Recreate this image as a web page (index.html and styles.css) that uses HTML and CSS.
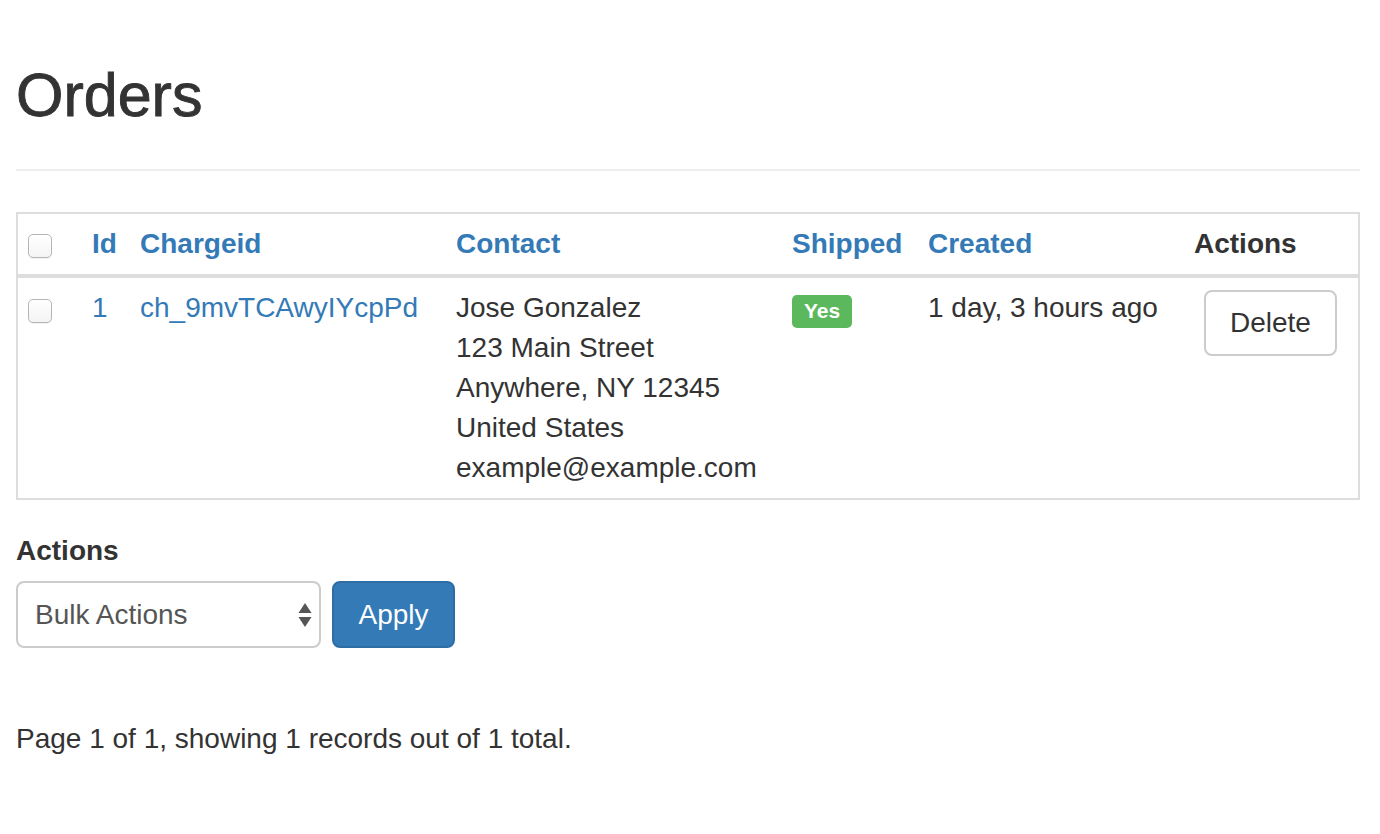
FILE: index.html
```html
<!DOCTYPE html>
<html lang="en">
<head>
<meta charset="utf-8">
<title>Orders</title>
<link rel="stylesheet" href="styles.css">
</head>
<body>
<div class="page">
  <div class="page-header">
    <h1 class="title">Orders</h1>
  </div>

  <table class="orders">
    <thead>
      <tr>
        <th class="c-check"><span class="checkbox"></span></th>
        <th class="c-id"><a href="#">Id</a></th>
        <th class="c-charge"><a href="#">Chargeid</a></th>
        <th class="c-contact"><a href="#">Contact</a></th>
        <th class="c-shipped"><a href="#">Shipped</a></th>
        <th class="c-created"><a href="#">Created</a></th>
        <th class="c-actions">Actions</th>
      </tr>
    </thead>
    <tbody>
      <tr>
        <td><span class="checkbox checkbox-row"></span></td>
        <td><a href="#">1</a></td>
        <td><a href="#">ch_9mvTCAwyIYcpPd</a></td>
        <td>
          <div>Jose Gonzalez</div>
          <div>123 Main Street</div>
          <div>Anywhere, NY 12345</div>
          <div>United States</div>
          <div>example@example.com</div>
        </td>
        <td><span class="label-yes">Yes</span></td>
        <td>1 day, 3 hours ago</td>
        <td><button class="btn btn-default" type="button">Delete</button></td>
      </tr>
    </tbody>
  </table>

  <form class="bulk">
    <label class="bulk-label">Actions</label>
    <div class="bulk-row">
      <div class="select-wrap">
        <select class="select">
          <option>Bulk Actions</option>
        </select>
        <svg class="select-arrows" width="14" height="26" viewBox="0 0 14 26" aria-hidden="true">
          <path d="M7 1 L13.5 11 L0.5 11 Z" fill="#555"/>
          <path d="M0.5 15 L13.5 15 L7 25 Z" fill="#555"/>
        </svg>
      </div>
      <button class="btn btn-primary" type="button">Apply</button>
    </div>
  </form>

  <p class="paging">Page 1 of 1, showing 1 records out of 1 total.</p>
</div>
</body>
</html>
```

FILE: styles.css
```css
html, body {
  margin: 0;
  padding: 0;
  background: #fff;
}

body {
  font-family: "Liberation Sans", Arial, Helvetica, sans-serif;
  font-size: 28px;
  line-height: 40px;
  color: #333;
}

a {
  color: #337ab7;
  text-decoration: none;
}

.page {
  padding: 0 20px 0 16px;
}

.page-header {
  padding-top: 62px;
  padding-bottom: 41px;
  border-bottom: 2px solid #eee;
  margin-bottom: 41px;
}

.title {
  margin: 0;
  font-size: 61px;
  line-height: 66px;
  font-weight: 500;
  color: #333;
  -webkit-text-stroke: 0.9px #333;
}

.orders {
  width: 100%;
  table-layout: fixed;
  border-collapse: separate;
  border-spacing: 0;
  border: 2px solid #ddd;
  margin: 0;
}

.orders th,
.orders td {
  box-sizing: border-box;
  padding: 10px;
  text-align: left;
  vertical-align: top;
  white-space: nowrap;
}

.orders th {
  font-weight: bold;
  vertical-align: bottom;
  border-bottom: 4px solid #ddd;
}

.c-check { width: 64px; }
.c-id { width: 48px; }
.c-charge { width: 316px; }
.c-contact { width: 336px; }
.c-shipped { width: 136px; }
.c-created { width: 266px; }
.c-actions { width: 174px; }

.checkbox {
  display: block;
  box-sizing: border-box;
  width: 24px;
  height: 24px;
  margin-top: 10px;
  margin-bottom: 6px;
  border: 1px solid #b5b5b5;
  border-radius: 5px;
  background: linear-gradient(#ffffff, #f4f4f4);
  box-shadow: 0 1px 1px rgba(0, 0, 0, 0.06);
}

.checkbox-row {
  margin-top: 11px;
}

.label-yes {
  display: inline-block;
  margin-top: 7px;
  padding: 5px 12px 6px;
  font-size: 21px;
  line-height: 22px;
  font-weight: bold;
  color: #fff;
  background: #5cb85c;
  border-radius: 5px;
  vertical-align: top;
}

.btn {
  display: inline-block;
  box-sizing: border-box;
  font-family: inherit;
  font-size: 28px;
  line-height: 40px;
  padding: 12px 24px;
  border-radius: 8px;
  border: 2px solid transparent;
  cursor: pointer;
}

.btn-default {
  color: #333;
  background: #fff;
  border-color: #ccc;
  height: 66px;
  padding-top: 11px;
  padding-bottom: 11px;
  margin-top: 2px;
  margin-left: 10px;
}

.btn-primary {
  color: #fff;
  background: #337ab7;
  border-color: #2e6da4;
  height: 67px;
  width: 123px;
  padding: 11px 0;
  text-align: center;
}

.bulk {
  margin: 31px 0 0;
}

.bulk-label {
  display: block;
  font-weight: bold;
  margin-bottom: 10px;
}

.bulk-row {
  display: flex;
  align-items: flex-start;
  gap: 11px;
}

.select-wrap {
  position: relative;
  width: 305px;
  height: 67px;
}

.select {
  -webkit-appearance: none;
  appearance: none;
  box-sizing: border-box;
  width: 100%;
  height: 100%;
  margin: 0;
  padding: 0 24px 0 17px;
  font-family: inherit;
  font-size: 28px;
  color: #555;
  background: #fff;
  border: 2px solid #ccc;
  border-radius: 8px;
  outline: none;
}

.select-arrows {
  position: absolute;
  right: 9px;
  top: 21px;
  pointer-events: none;
}

.paging {
  margin: 71px 0 0;
}
```
